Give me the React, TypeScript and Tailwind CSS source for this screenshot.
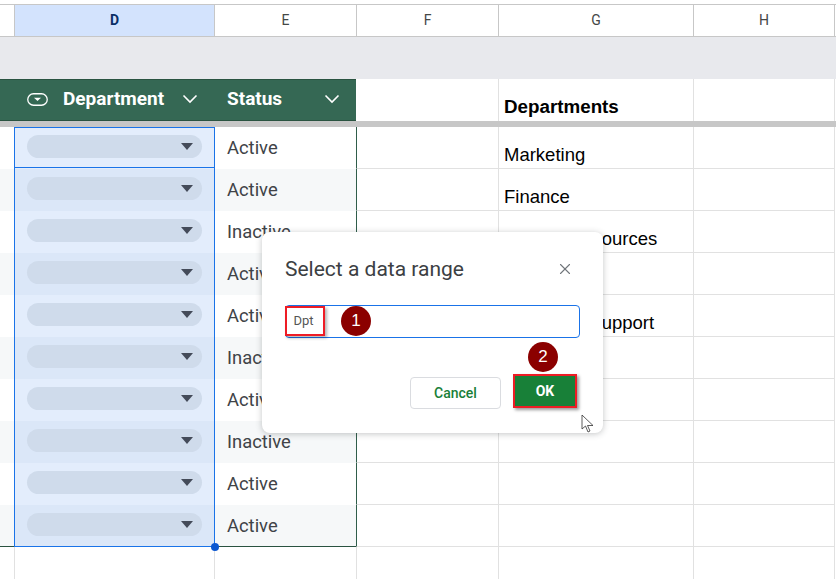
import { X } from 'lucide-react'

const rows = [
  { status: 'Active', dept: 'Marketing' },
  { status: 'Active', dept: 'Finance' },
  { status: 'Inactive', dept: 'Human Resources' },
  { status: 'Active', dept: 'Sales' },
  { status: 'Active', dept: 'Customer Support' },
  { status: 'Inactive', dept: '' },
  { status: 'Active', dept: '' },
  { status: 'Inactive', dept: '' },
  { status: 'Active', dept: '' },
  { status: 'Active', dept: '' },
]

const columns = [
  { name: 'D', className: 'w-[200px] bg-[#d3e3fd] font-bold text-[#0b2f66]' },
  { name: 'E', className: 'w-[142px] text-[#444746]' },
  { name: 'F', className: 'w-[142px] text-[#444746]' },
  { name: 'G', className: 'w-[195px] text-[#444746]' },
  { name: 'H', className: 'w-[142px] text-[#444746]' },
]

function Chevron() {
  return (
    <svg width="16" height="10" viewBox="0 0 16 10" fill="none" stroke="white" strokeWidth="1.6">
      <path d="M1.5 1.5 8 8l6.5-6.5" />
    </svg>
  )
}

function Badge({ n, className }: { n: number; className: string }) {
  return (
    <div className={`absolute flex h-[30px] w-[30px] items-center justify-center rounded-full bg-[#8b0000] text-[17px] text-white ${className}`}>
      {n}
    </div>
  )
}

function DataRow({ status, dept, index }: { status: string; dept: string; index: number }) {
  const even = index % 2 === 1
  const stripe = even ? 'bg-[#f6f8f9]' : 'bg-white'
  return (
    <div className="flex h-[42px]">
      <div className={`w-[14px] ${stripe}`} />
      <div className={`flex w-[200px] items-center pr-[12px] pb-[3px] pl-[13px] ${even ? 'bg-[#dbe7f8]' : 'bg-[#e3edfc]'}`}>
        <div className="flex h-[23px] w-full items-center justify-end rounded-full bg-[#cfdbeb] pr-[9px]">
          <div className="h-0 w-0 border-x-[6px] border-t-[7px] border-x-transparent border-t-[#444b59]" />
        </div>
      </div>
      <div className={`flex w-[142px] items-center pl-[13px] font-['Roboto',sans-serif] text-[18.4px] text-[#404347] ${stripe}`}>
        {status}
      </div>
      <div className="w-[142px] border-b border-l border-[#e1e1e1] border-l-[#2f5d4a]" />
      <div className="flex w-[195px] items-end border-b border-l border-[#e1e1e1] pb-[1px] pl-[5px] text-[18.5px] leading-[24px] whitespace-nowrap text-black">
        {dept}
      </div>
      <div className="w-[142px] border-r border-b border-l border-[#e1e1e1]" />
    </div>
  )
}

export default function App() {
  return (
    <div className="relative h-[579px] w-[836px] overflow-hidden bg-white font-['Liberation_Sans',Arial,sans-serif]">
      <div className="h-[4px]" />

      {/* column letters */}
      <div className="flex h-[33px] border-y border-[#c7c7c7]">
        <div className="w-[14px]" />
        {columns.map((c) => (
          <div
            key={c.name}
            className={`flex items-center justify-center border-l border-[#c7c7c7] font-['Roboto',sans-serif] text-[14px] last:border-r ${c.className}`}
          >
            {c.name}
          </div>
        ))}
      </div>

      <div className="h-[42px] bg-[#e8e9ed]" />

      {/* table header */}
      <div className="flex h-[42px]">
        <div className="flex w-[356px] border-y border-[#2a5341] bg-[#356854] pb-[2px] font-['Roboto',sans-serif] text-[19px] font-bold text-white">
          <div className="flex w-[214px] items-center pr-[16px] pl-[27px]">
            <svg width="21" height="13" viewBox="0 0 21 13" fill="none" className="mr-[15px]">
              <rect x="0.75" y="0.75" width="19.5" height="11.5" rx="5.75" stroke="white" strokeWidth="1.3" />
              <path d="M7 4.8h7L10.5 8z" fill="white" />
            </svg>
            <span className="flex-1">Department</span>
            <Chevron />
          </div>
          <div className="flex flex-1 items-center pr-[16px] pl-[13px]">
            <span className="flex-1">Status</span>
            <Chevron />
          </div>
        </div>
        <div className="w-[142px]" />
        <div className="flex w-[195px] items-end border-l border-[#e1e1e1] pb-[2px] pl-[5px] text-[18.8px] leading-[24px] font-bold text-black">
          Departments
        </div>
        <div className="w-[142px] border-x border-[#e1e1e1]" />
      </div>

      {/* frozen row bar */}
      <div className="h-[6px] bg-[#c7c7c7]" />

      {rows.map((r, i) => (
        <DataRow key={i} status={r.status} dept={r.dept} index={i} />
      ))}

      {/* row below the table */}
      <div className="flex h-[33px]">
        <div className="w-[14px]" />
        <div className="w-[200px] border-l border-[#e1e1e1]" />
        <div className="w-[142px] border-l border-[#e1e1e1]" />
        <div className="w-[142px] border-l border-[#e1e1e1]" />
        <div className="w-[195px] border-l border-[#e1e1e1]" />
        <div className="w-[142px] border-x border-[#e1e1e1]" />
      </div>

      {/* table bottom edge and selection */}
      <div className="absolute top-[546px] left-0 h-px w-[356px] bg-[#2a5341]" />
      <div className="absolute top-[127px] left-[14px] h-[420px] w-[201px] border border-[#1a73e8]" />
      <div className="absolute top-[167px] left-[14px] h-px w-[201px] bg-[#1a73e8]" />
      <div className="absolute top-[543px] left-[211px] h-[8px] w-[8px] rounded-full bg-[#0b57d0]" />

      {/* dialog */}
      <div className="absolute top-[232px] left-[262px] h-[201px] w-[341px] rounded-[8px] bg-white px-[23px] pt-[24px] shadow-[0_1px_6px_rgba(60,64,67,0.3)]">
        <div className="flex items-center justify-between font-['Roboto',sans-serif] text-[21px] leading-[26px] text-[#3c4043]">
          Select a data range
          <X size={18} strokeWidth={1.5} className="mr-[6px] text-[#70757a]" />
        </div>
        <div className="relative mt-[23px] flex h-[33px] items-center rounded-[4px] border border-[#1a73e8] bg-white">
          <div className="absolute top-0 left-[-1px] flex h-[30px] w-[40px] items-center justify-center border-2 border-[#ee1c25] pr-[3px] font-['Roboto',sans-serif] text-[13px] text-[#555] shadow-[2px_2px_3px_rgba(0,0,0,0.3)]">
            Dpt
          </div>
        </div>
        <div className="mt-[36px] mr-[3px] flex items-start justify-end gap-[12px] font-['Roboto',sans-serif] text-[14px] font-medium">
          <button className="mt-[3px] flex h-[32px] w-[91px] items-center justify-center rounded-[4px] border border-[#dadce0] text-[#188038]">
            Cancel
          </button>
          <button className="flex h-[34px] w-[64px] items-center justify-center border-2 border-[#ee1c25] bg-[#188038] font-bold text-white shadow-[2px_2px_3px_rgba(0,0,0,0.4)]">
            OK
          </button>
        </div>
        <Badge n={1} className="top-[74px] left-[79px]" />
        <Badge n={2} className="top-[110px] left-[266px]" />
      </div>

      {/* mouse cursor */}
      <svg width="14" height="20" viewBox="0 0 14 20" className="absolute top-[414px] left-[581px]" fill="white" stroke="#333" strokeWidth="0.8">
        <path d="M1 1v14l3.5-3 2.5 6 2-1-2.5-5.5H12z" />
      </svg>
    </div>
  )
}
